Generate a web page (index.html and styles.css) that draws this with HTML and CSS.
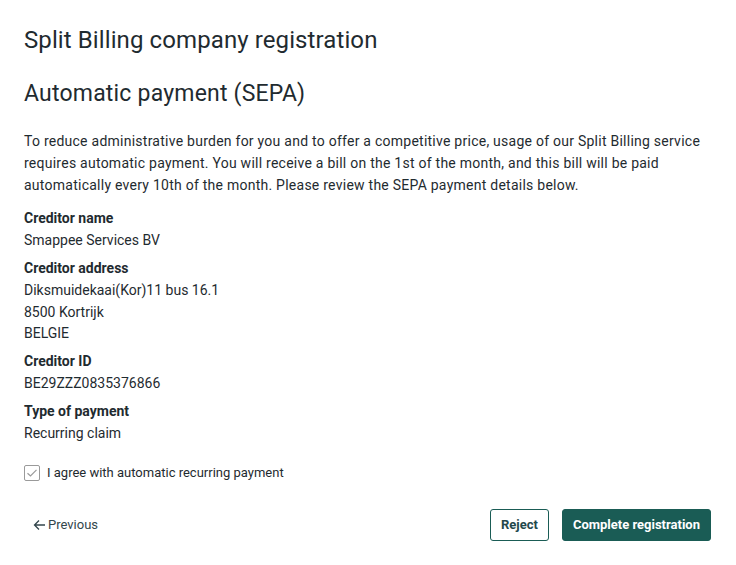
FILE: index.html
```html
<!DOCTYPE html>
<html>
<head>
<meta charset="utf-8">
<link rel="stylesheet" href="styles.css">
</head>
<body>
<main class="page">
  <h1 class="title">Split Billing company registration</h1>
  <h2 class="subtitle">Automatic payment (SEPA)</h2>
  <p class="intro">To reduce administrative burden for you and to offer a competitive price, usage of our Split Billing service requires automatic payment. You will receive a bill on the 1st of the month, and this bill will be paid automatically every 10th of the month. Please review the SEPA payment details below.</p>
  <dl class="details">
    <div class="group">
      <dt>Creditor name</dt>
      <dd>Smappee Services BV</dd>
    </div>
    <div class="group">
      <dt>Creditor address</dt>
      <dd>Diksmuidekaai(Kor)11 bus 16.1</dd>
      <dd>8500 Kortrijk</dd>
      <dd>BELGIE</dd>
    </div>
    <div class="group">
      <dt>Creditor ID</dt>
      <dd>BE29ZZZ0835376866</dd>
    </div>
    <div class="group">
      <dt>Type of payment</dt>
      <dd>Recurring claim</dd>
    </div>
  </dl>
  <label class="agree">
    <span class="box"><svg width="12" height="10" viewBox="0 0 12 10"><path d="M1.5 5.2 L4.5 8 L10.5 1.8" fill="none" stroke="#9a9a9a" stroke-width="1.2"/></svg></span>
    <span>I agree with automatic recurring payment</span>
  </label>
  <div class="actions">
    <a class="prev"><svg width="13" height="12" viewBox="0 0 13 12"><path d="M12 6 H1.5 M6 1.5 L1.5 6 L6 10.5" fill="none" stroke="#33464c" stroke-width="1.3"/></svg>Previous</a>
    <div class="buttons">
      <button class="btn btn-outline">Reject</button>
      <button class="btn btn-primary">Complete registration</button>
    </div>
  </div>
</main>
</body>
</html>
```
FILE: styles.css
```css
* { box-sizing: border-box; }
body {
  margin: 0;
  background: #fff;
  font-family: Roboto, "Liberation Sans", sans-serif;
  color: #1f2b30;
}
.page {
  padding: 24px 24px 0 24px;
  width: 736px;
}
.title {
  margin: 0;
  font-size: 24px;
  font-weight: 400;
  line-height: 32px;
  letter-spacing: 0.1px;
}
.subtitle {
  margin: 22px 0 0 0;
  font-size: 23px;
  font-weight: 400;
  line-height: 32px;
  letter-spacing: 0.2px;
}
.intro {
  margin: 20px 0 0 0;
  font-size: 14px;
  line-height: 22px;
  letter-spacing: 0.25px;
}
.details {
  margin: 11px 0 0 0;
}
.group { margin-bottom: 5.5px; }
.details dt {
  font-weight: 700;
  font-size: 14px;
  line-height: 23px;
}
.details dd {
  margin: 0;
  font-size: 14px;
  line-height: 21.5px;
}
.agree {
  display: flex;
  align-items: center;
  gap: 7px;
  margin-top: 20px;
  font-size: 13px;
}
.box {
  width: 16px;
  height: 16px;
  border: 1px solid #9a9a9a;
  border-radius: 2px;
  display: flex;
  align-items: center;
  justify-content: center;
}
.actions {
  display: flex;
  justify-content: space-between;
  align-items: center;
  margin-top: 28px;
  padding-right: 1px;
}
.prev {
  display: flex;
  align-items: center;
  gap: 2px;
  margin-left: 9px;
  font-size: 13px;
  color: #33464c;
}
.buttons { display: flex; gap: 13px; }
.btn {
  height: 32px;
  border-radius: 3px;
  font-family: Roboto, "Liberation Sans", sans-serif;
  font-size: 13px;
  font-weight: 700;
  padding: 0 10px;
}
.btn-outline {
  background: #fff;
  border: 1px solid #1a5c55;
  color: #23474b;
}
.btn-primary {
  background: #1a5c55;
  border: 1px solid #1a5c55;
  color: #fff;
}
```
